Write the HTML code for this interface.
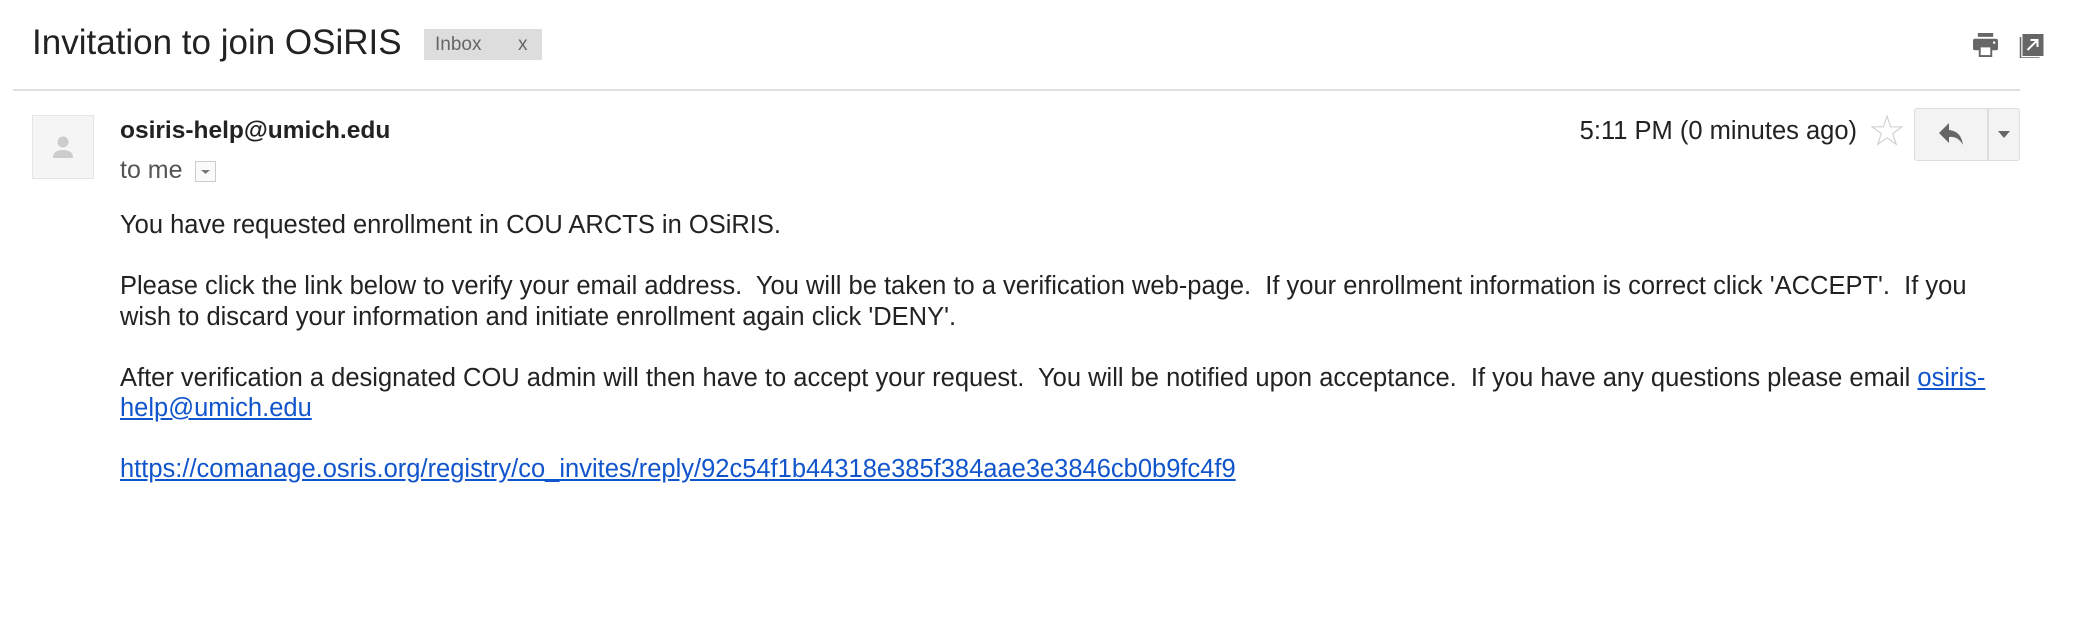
<!DOCTYPE html>
<html><head><meta charset="utf-8"><style>
*{margin:0;padding:0;box-sizing:border-box}
body{width:2082px;height:618px;background:#fff;font-family:"Liberation Sans",Arial,sans-serif;color:#222;position:relative;overflow:hidden}
.a{position:absolute}
.title{left:32px;top:23px;font-size:35px;color:#222;white-space:nowrap}
.badge{left:424px;top:29px;width:118px;height:31px;background:#ddd;color:#666;font-size:19px;line-height:31px;padding-left:11px}
.badge span{position:absolute;left:94px}
.hr{left:13px;top:89px;width:2007px;height:2px;background:#e0e0e0}
.avatar{left:32px;top:115px;width:62px;height:64px;background:#f5f5f5;border:1px solid #e5e5e5}
.from{left:120px;top:117px;font-size:24.5px;font-weight:bold;color:#222}
.tome{left:120px;top:156px;font-size:25px;color:#555}
.dd{left:195px;top:161px;width:21px;height:21px;border:1px solid #ccc;background:#fafafa}
.time{left:1400px;top:117px;font-size:25.5px;color:#222;width:457px;text-align:right;white-space:nowrap}
.btn{left:1914px;top:108px;width:106px;height:53px;border:1px solid #ddd;border-radius:3px;background:#f3f3f3}
.body{left:120px;top:210px;width:1885px;font-size:25.5px;line-height:30.5px;color:#222}
.body a{color:#1155cc;text-decoration:underline}
</style></head><body>
<div class="a title">Invitation to join OSiRIS</div>
<div class="a badge">Inbox<span>x</span></div>
<svg class="a" style="left:1972px;top:33px" width="27" height="24" viewBox="0 0 26 25"><rect x="5" y="0" width="16" height="4" fill="#666"/><rect x="0" y="6" width="26" height="12" rx="2" fill="#666"/><rect x="6" y="14" width="14" height="11" fill="#666"/><rect x="8" y="15" width="10" height="8" fill="#fff"/><circle cx="22" cy="10" r="1.3" fill="#fff"/></svg>
<svg class="a" style="left:2019px;top:33px" width="26" height="25" viewBox="0 0 23 25"><path d="M0 4V25H19" fill="none" stroke="#666" stroke-width="1.5"/><rect x="2" y="1" width="21" height="22" fill="#666"/><path d="M7 17L17 7M10 7H17V14" stroke="#fff" stroke-width="2" fill="none"/></svg>
<div class="a hr"></div>
<div class="a avatar"><svg width="62" height="64" viewBox="0 0 62 64"><circle cx="30" cy="26" r="5.5" fill="#ccc"/><path d="M20 42Q20 34 30 34Q40 34 40 42Z" fill="#ccc"/></svg></div>
<div class="a from">osiris-help@umich.edu</div>
<div class="a tome">to me</div>
<div class="a dd"><svg width="19" height="19"><path d="M5 8H14L9.5 12Z" fill="#777"/></svg></div>
<div class="a time">5:11 PM (0 minutes ago)</div>
<svg class="a" style="left:1870px;top:114px" width="34" height="33" viewBox="0 0 32 32"><path d="M16 2L19.5 12.5H30.5L21.5 19L25 29.5L16 23L7 29.5L10.5 19L1.5 12.5H12.5Z" fill="none" stroke="#ccc" stroke-width="1"/></svg>
<div class="a btn"><div style="position:absolute;left:72px;top:0;width:2px;height:51px;background:#ddd"></div>
<svg style="position:absolute;left:24px;top:14px" width="26" height="24" viewBox="0 0 26 24"><path d="M10 0L0 10L10 20V14Q19 13 24 22Q22 8 10 7Z" fill="#666"/></svg>
<svg style="position:absolute;left:82px;top:21px" width="14" height="10"><path d="M1 1H13L7 8Z" fill="#666"/></svg></div>
<div class="a body">
<p>You have requested enrollment in COU ARCTS in OSiRIS.</p><p>&nbsp;</p>
<p>Please click the link below to verify your email address.&nbsp; You will be taken to a verification web-page.&nbsp; If your enrollment information is correct click 'ACCEPT'.&nbsp; If you wish to discard your information and initiate enrollment again click 'DENY'.</p><p>&nbsp;</p>
<p>After verification a designated COU admin will then have to accept your request.&nbsp; You will be notified upon acceptance.&nbsp; If you have any questions please email <a>osiris-help@umich.edu</a></p><p>&nbsp;</p>
<p><a>https://comanage.osris.org/registry/co_invites/reply/92c54f1b44318e385f384aae3e3846cb0b9fc4f9</a></p>
</div>
</body></html>
